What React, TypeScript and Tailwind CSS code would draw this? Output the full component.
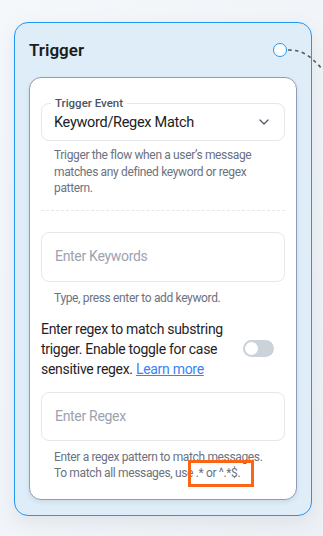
import { ChevronDown } from "lucide-react";

export default function App() {
  return (
    <div
      className="relative w-[323px] h-[536px] overflow-hidden bg-gradient-to-br from-[#f5f8fb] to-[#edf1f5] pt-[22px] pl-[14px]"
      style={{ fontFamily: "Roboto, 'Liberation Sans', sans-serif" }}
    >
      <div className="relative w-[298px] h-[494px] rounded-[14px] border border-[#2196f3] bg-[#deedf8] shadow-[0_6px_18px_rgba(100,116,139,0.12)]">
        <div className="flex items-center justify-between h-[54px] pl-[14px] pr-[24px]">
          <h1 className="text-[17px] font-semibold text-[#1a1d21] pt-[2px]">Trigger</h1>
          <div className="w-[14px] h-[14px] rounded-full bg-white border-[1.5px] border-[#2196f3]" />
        </div>

        <div className="mx-[14px] h-[423px] rounded-[12px] border border-[#8e9db1] bg-white px-[11px] pt-[25px] shadow-[0_2px_4px_rgba(100,116,139,0.15)]">
          {/* Trigger event select */}
          <div className="relative h-[38px] rounded-[8px] border border-[#e5e7eb] flex items-center justify-between pl-[12px] pr-[12px]">
            <span className="absolute left-[9px] -top-[9px] bg-white px-[4px] text-[11.5px] font-medium leading-[16px] text-[#4b5563]">
              Trigger Event
            </span>
            <span className="text-[14.5px] tracking-[-0.3px] text-[#1a1d21] pt-[1px]">Keyword/Regex Match</span>
            <ChevronDown size={16} strokeWidth={1.8} className="text-[#4b5563]" />
          </div>

          <p className="mt-[6px] pl-[13px] pr-[4px] text-[12px] tracking-[-0.35px] leading-[16.5px] text-[#6b7280]">
            Trigger the flow when a user’s message matches any defined keyword or regex pattern.
          </p>

          <div className="mt-[13px] border-t border-dashed border-[#e5e7eb]" />

          {/* Keywords */}
          <div className="mt-[21px] h-[50px] rounded-[8px] border border-[#e5e7eb] flex items-center px-[13px]">
            <span className="text-[14px] tracking-[-0.3px] text-[#9ca3af]">Enter Keywords</span>
          </div>
          <p className="mt-[8px] pl-[13px] text-[12px] tracking-[-0.35px] leading-[16px] text-[#6b7280]">
            Type, press enter to add keyword.
          </p>

          {/* Regex toggle */}
          <div className="mt-[13px] flex items-center justify-between pr-[11px]">
            <p className="w-[192px] text-[14px] tracking-[-0.3px] leading-[20px] text-[#1f2328]">
              Enter regex to match substring trigger. Enable toggle for case sensitive regex.{" "}
              <a className="text-[#3b82f6] underline">Learn more</a>
            </p>
            <div className="w-[31px] h-[17px] rounded-full bg-[#cbd2d9] flex items-center pl-[2px]">
              <div className="w-[13px] h-[13px] rounded-full bg-white" />
            </div>
          </div>

          {/* Regex */}
          <div className="mt-[13px] h-[49px] rounded-[8px] border border-[#e5e7eb] flex items-center px-[13px]">
            <span className="text-[14px] tracking-[-0.3px] text-[#9ca3af]">Enter Regex</span>
          </div>
          <div className="relative mt-[8px] pl-[13px] pr-[2px] text-[12px] tracking-[-0.35px] leading-[16px] text-[#6b7280]">
            <p>Enter a regex pattern to match messages.</p>
            <p>To match all messages, use .* or ^.*$.</p>
            <div className="absolute left-[147px] top-[11px] w-[66px] h-[27px] border-[3px] border-[#fa6516]" />
          </div>
        </div>
      </div>

      {/* connector line out of the output handle */}
      <svg
        className="absolute z-10 left-[287px] top-[44px]"
        width="40"
        height="40"
        viewBox="0 0 40 40"
      >
        <path
          d="M1 6 C 14 6, 22 10, 36 26"
          fill="none"
          stroke="#555b63"
          strokeWidth="1.6"
          strokeDasharray="3.5 3.5"
        />
      </svg>
    </div>
  );
}
